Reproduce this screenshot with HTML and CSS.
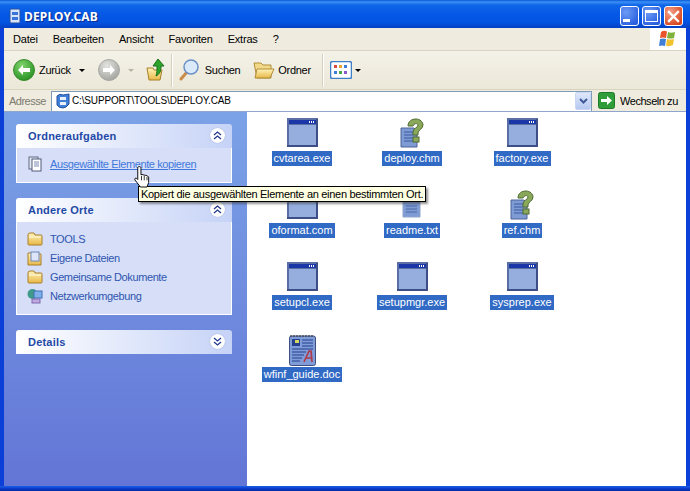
FILE: index.html
```html
<!DOCTYPE html>
<html lang="de">
<head>
<meta charset="utf-8">
<title>DEPLOY.CAB</title>
<link rel="stylesheet" href="styles.css">
</head>
<body>
<svg class="defs" width="0" height="0" aria-hidden="true">
  <defs>
    <linearGradient id="fold" x1="0" y1="0" x2="0" y2="1"><stop offset="0" stop-color="#fff3b8"/><stop offset="1" stop-color="#e8b848"/></linearGradient>
    <radialGradient id="grn" cx=".4" cy=".3" r=".8"><stop offset="0" stop-color="#7fd46a"/><stop offset="1" stop-color="#1f8a1c"/></radialGradient>
    <radialGradient id="gry" cx=".4" cy=".3" r=".8"><stop offset="0" stop-color="#e4e4e0"/><stop offset="1" stop-color="#9c9c98"/></radialGradient>
    <symbol id="exe" viewBox="0 0 31 29">
      <rect x="0" y="0" width="31" height="29" fill="#5a6fa6"/>
      <rect x="29" y="1" width="2" height="28" fill="#3d4f86"/>
      <rect x="0" y="27" width="31" height="2" fill="#3d4f86"/>
      <rect x="2" y="2" width="27" height="4" fill="#1b36a6"/>
      <rect x="22" y="3" width="1" height="2" fill="#fff"/><rect x="24" y="3" width="1" height="2" fill="#fff"/><rect x="26" y="3" width="1" height="2" fill="#fff"/>
      <rect x="2" y="7" width="27" height="20" fill="#95aede"/>
    </symbol>
    <symbol id="chm" viewBox="0 0 24 30">
      <path d="M1 10h13l3 3v16H1z" fill="#7f9bd3" stroke="#4d6299"/>
      <path d="M4 14h9M4 17h9M4 20h9M4 23h9" stroke="#3b5aa0"/>
      <path d="M8 8c0-5 4-7 8-7s7 3 7 6c0 4-5 5-5 8v2h-5v-3c0-4 5-4 5-7 0-2-4-2-5 1z" fill="#8aa85a" stroke="#4f6b33"/>
      <rect x="13" y="19" width="6" height="5" fill="#8aa85a" stroke="#4f6b33"/>
    </symbol>
    <symbol id="folder" viewBox="0 0 16 14">
      <path d="M1 3q0-2 2-2h4l1 2h6q1 0 1 1v8q0 1-1 1H2q-1 0-1-1z" fill="url(#fold)" stroke="#a87f28"/>
      <path d="M2 5h12" stroke="#fffbe0"/>
    </symbol>
  </defs>
</svg>
<div class="window">
  <header class="titlebar">
    <svg class="title-icon" width="16" height="16" viewBox="0 0 16 16"><rect x="3" y="1" width="10" height="14" rx="1" fill="#d8e4fa" stroke="#27509e"/><rect x="5" y="4" width="6" height="3" fill="#3a74d8"/><rect x="5" y="9" width="6" height="3" fill="#3a74d8"/></svg>
    <span class="title-text">DEPLOY.CAB</span>
    <div class="win-btns">
      <div class="win-btn win-min"><span class="min-glyph"></span></div>
      <div class="win-btn win-max"><span class="max-glyph"></span></div>
      <div class="win-btn win-close">
        <svg width="13" height="13" viewBox="0 0 13 13"><path d="M2 2l9 9M11 2l-9 9" stroke="#fff" stroke-width="2.4" stroke-linecap="square"/></svg>
      </div>
    </div>
  </header>

  <nav class="menubar">
    <div class="menu-items">
      <span class="menu-item">Datei</span><span class="menu-item">Bearbeiten</span><span class="menu-item">Ansicht</span><span class="menu-item">Favoriten</span><span class="menu-item">Extras</span><span class="menu-item">?</span>
    </div>
    <div class="brand">
      <svg width="20" height="20" viewBox="0 0 20 20"><path d="M3 3q3-2 6-.5L8 9Q5 8 2 9z" fill="#e8532a"/><path d="M10 3q3 1.500 7 0l-1 6q-4 1-7 0z" fill="#7fb23c"/><path d="M2 10q3-1 6 0l-1 7q-3-1-6 0z" fill="#3f7fd8"/><path d="M9 10q3 1 7 0l-1 6q-4 2-7 .500z" fill="#f2c230"/></svg>
    </div>
  </nav>

  <div class="toolbar">
    <div class="tb-btn tb-back">
      <svg width="22" height="22" viewBox="0 0 22 22"><circle cx="11" cy="11" r="10.500" fill="url(#grn)" stroke="#3b8a2c"/><path d="M5 11l5-5v3h7v4h-7v3z" fill="#fff"/></svg>
      <span class="tb-label">Zurück</span>
    </div>
    <span class="caret caret-back"></span>
    <svg class="tb-fwd" width="22" height="22" viewBox="0 0 22 22"><circle cx="11" cy="11" r="10.500" fill="url(#gry)" stroke="#a8a8a4"/><path d="M17 11l-5-5v3H5v4h7v3z" fill="#fff"/></svg>
    <span class="caret caret-fwd"></span>
    <svg class="tb-up" width="20" height="24" viewBox="0 0 20 24"><path d="M1 10h6l1 2h8l-2 10H3z" fill="url(#fold)" stroke="#a87f28"/><path d="M12 1l6 7h-3c0 5-1 8-5 10 1-3 1-6 1-10H7z" fill="#2da32a" stroke="#1a6f1a"/></svg>
    <span class="tb-sep tb-sep-a"></span>
    <div class="tb-btn tb-search">
      <svg width="22" height="24" viewBox="0 0 22 24"><path d="M3 21l6-7" stroke="#c98a4a" stroke-width="3" stroke-linecap="round"/><circle cx="13" cy="9" r="7" fill="#dbeaf9" stroke="#6a90c8" stroke-width="1.500"/></svg>
      <span class="tb-label">Suchen</span>
    </div>
    <div class="tb-btn tb-folders">
      <svg width="22" height="20" viewBox="0 0 22 20"><path d="M1 3h7l2 2h8v13H4z" fill="#f2d98a" stroke="#b08d3a"/><path d="M4 9h17l-4 9H2z" fill="url(#fold)" stroke="#b08d3a"/></svg>
      <span class="tb-label">Ordner</span>
    </div>
    <span class="tb-sep tb-sep-b"></span>
    <svg class="tb-views" width="22" height="18" viewBox="0 0 22 18"><rect x=".5" y=".5" width="21" height="17" rx="2" fill="#fff" stroke="#3f7fc8" stroke-width="1.500"/><g fill="#d84a3a"><rect x="4" y="4" width="3" height="3"/></g><g fill="#e8a830"><rect x="9" y="4" width="3" height="3"/></g><g fill="#3f7fd8"><rect x="14" y="4" width="3" height="3"/><rect x="4" y="10" width="3" height="3"/></g><g fill="#4aa84a"><rect x="9" y="10" width="3" height="3"/></g><g fill="#8a5ac8"><rect x="14" y="10" width="3" height="3"/></g></svg>
    <span class="caret caret-views"></span>
  </div>

  <div class="addressbar">
    <span class="addr-label">Adresse</span>
    <div class="addr-input">
      <svg width="14" height="16" viewBox="0 0 14 16"><path d="M1 3q3-3 6-1l6-1v10q-3 4-6 4-4 0-6-3z" fill="#3f7fd8" stroke="#27509e"/><rect x="4" y="4" width="6" height="3" fill="#e8f0fc"/><rect x="4" y="9" width="6" height="3" fill="#e8f0fc"/></svg>
      <span class="addr-text">C:\SUPPORT\TOOLS\DEPLOY.CAB</span>
      <div class="addr-drop"><svg width="9" height="6" viewBox="0 0 9 6"><path d="M1 1l3.500 3.500L8 1" fill="none" stroke="#3f5a9a" stroke-width="2"/></svg></div>
    </div>
    <div class="go">
      <svg width="17" height="17" viewBox="0 0 17 17"><rect x=".5" y=".5" width="16" height="16" rx="2" fill="#2f9e3a" stroke="#1f7a2a"/><path d="M3 7h6V4l5 4.500L9 13v-3H3z" fill="#fff"/></svg>
      <span class="go-label">Wechseln zu</span>
    </div>
  </div>

  <main class="content">
    <aside class="sidebar">
      <section class="panel">
        <div class="panel-head"><span class="panel-title">Ordneraufgaben</span><span class="toggle"><svg width="9" height="9" viewBox="0 0 9 9"><path d="M1 4l3.500-3L8 4M1 8l3.500-3L8 8" fill="none" stroke="#22398f" stroke-width="1.300"/></svg></span></div>
        <div class="panel-body body-tasks">
          <div class="link-row">
            <svg width="16" height="16" viewBox="0 0 16 16"><rect x="2" y="1" width="9" height="12" fill="#e4e8f2" stroke="#5f6a84"/><rect x="5" y="3" width="9" height="12" fill="#fff" stroke="#4f5a78"/><path d="M7 6h5M7 8h5M7 10h5" stroke="#7a8ab0"/></svg>
            <span class="link link-active">Ausgewählte Elemente kopieren</span>
          </div>
        </div>
      </section>
      <section class="panel">
        <div class="panel-head"><span class="panel-title">Andere Orte</span><span class="toggle"><svg width="9" height="9" viewBox="0 0 9 9"><path d="M1 4l3.500-3L8 4M1 8l3.500-3L8 8" fill="none" stroke="#22398f" stroke-width="1.300"/></svg></span></div>
        <div class="panel-body body-places">
          <div class="link-row"><svg width="16" height="14" viewBox="0 0 16 14"><use href="#folder"/></svg><span class="link">TOOLS</span></div>
          <div class="link-row"><svg width="16" height="16" viewBox="0 0 16 16"><path d="M1 3h5l1 1h7v11H1z" fill="url(#fold)" stroke="#a87f28"/><rect x="4" y="2" width="8" height="9" fill="#dce6f8" stroke="#6f86b8"/></svg><span class="link">Eigene Dateien</span></div>
          <div class="link-row"><svg width="16" height="14" viewBox="0 0 16 14"><use href="#folder"/></svg><span class="link">Gemeinsame Dokumente</span></div>
          <div class="link-row"><svg width="16" height="16" viewBox="0 0 16 16"><circle cx="5.500" cy="6" r="5" fill="#3f9a8a"/><rect x="7" y="3" width="8" height="7" fill="#7fb0ea" stroke="#3f6fb8"/><rect x="5" y="11" width="8" height="4" fill="#c0a8e0" stroke="#7f68b0"/></svg><span class="link">Netzwerkumgebung</span></div>
        </div>
      </section>
      <section class="panel">
        <div class="panel-head"><span class="panel-title">Details</span><span class="toggle"><svg width="9" height="9" viewBox="0 0 9 9"><path d="M1 1l3.500 3L8 1M1 5l3.500 3L8 5" fill="none" stroke="#22398f" stroke-width="1.300"/></svg></span></div>
      </section>
    </aside>

    <section class="files">
      <div class="file"><svg class="ic-exe"><use href="#exe"/></svg><span class="file-name">cvtarea.exe</span></div>
      <div class="file"><svg class="ic-chm"><use href="#chm"/></svg><span class="file-name">deploy.chm</span></div>
      <div class="file"><svg class="ic-exe"><use href="#exe"/></svg><span class="file-name">factory.exe</span></div>
      <div class="file"><svg class="ic-exe"><use href="#exe"/></svg><span class="file-name">oformat.com</span></div>
      <div class="file"><svg class="ic-txt" viewBox="0 0 20 30"><path d="M1 3h15l2 2v22H1z" fill="#7f9bd3" stroke="#8fa5cc"/><path d="M4 16h11M4 19h11M4 22h11" stroke="#4f6aa8"/></svg><span class="file-name">readme.txt</span></div>
      <div class="file"><svg class="ic-chm"><use href="#chm"/></svg><span class="file-name">ref.chm</span></div>
      <div class="file"><svg class="ic-exe"><use href="#exe"/></svg><span class="file-name">setupcl.exe</span></div>
      <div class="file"><svg class="ic-exe"><use href="#exe"/></svg><span class="file-name">setupmgr.exe</span></div>
      <div class="file"><svg class="ic-exe"><use href="#exe"/></svg><span class="file-name">sysprep.exe</span></div>
      <div class="file"><svg class="ic-doc" viewBox="0 0 27 32"><rect x=".5" y="2" width="26" height="29.500" rx="2" fill="#7f9bd8" stroke="#3f4f7f"/><path d="M2 1v2M5 1v2M8 1v2M11 1v2M14 1v2M17 1v2M20 1v2M23 1v2" stroke="#333"/><rect x="3" y="5" width="8" height="7" fill="#24408f"/><rect x="6" y="6" width="4" height="3" fill="#d8d860"/><path d="M13 6h11M13 9h11M13 12h11M3 15h21M3 18h14M3 21h12M3 24h10M3 27h8" stroke="#24408f"/><path d="M15 28l5-11h2l1 11M17 24h5" fill="none" stroke="#b03a4a" stroke-width="1.700"/></svg><span class="file-name">wfinf_guide.doc</span></div>
    </section>

    <div class="tooltip">Kopiert die ausgewählten Elemente an einen bestimmten Ort.</div>
    <svg class="cursor" width="17" height="22" viewBox="1 1 14 20"><path d="M6 1.500c1 0 1.500 .6 1.500 1.500v6l1-.3 1 .3 1 .3 1.500 .2 1.500 .6 1 1v5l-1.500 4H7l-5-6.500c-.6-1.200 .6-2 1.600-1.300l1 1V3c0-1 .4-1.500 1.400-1.500z" fill="#fff" stroke="#000" stroke-width=".85"/><path d="M8 10v4M10.500 10v4M13 11v3" stroke="#000" stroke-width=".7"/></svg>
  </main>
  <footer class="bottom-edge"></footer>
</div>
</body>
</html>
```

FILE: styles.css
```css
* { box-sizing: border-box; }
html, body { margin: 0; padding: 0; }
body { width: 690px; height: 491px; overflow: hidden; font-family: "Liberation Sans", Arial, sans-serif; font-size: 11px; color: #000; }
.defs { display: block; height: 0; }
.window { width: 690px; height: 491px; display: flex; flex-direction: column; background: #0a3fd8; position: relative; overflow: hidden; }

.titlebar { height: 28px; flex: none; display: flex; align-items: center; padding: 4px 7px 0 7px; background: linear-gradient(#0a58d8 0, #3d92f5 2px, #0f66e8 5px, #0558e6 14px, #0454e2 22px, #0340c4 28px); }
.title-icon { flex: none; margin: 0 1px 0 0; }
.title-text { color: #fff; font-weight: 700; font-size: 12px; font-family: "Noto Sans", sans-serif; text-shadow: 1px 1px 1px #0f2a8a; letter-spacing: .15px; }
.win-btns { margin-left: auto; display: flex; gap: 3px; }
.win-btn { width: 19px; height: 20px; border: 1px solid #fff; border-radius: 3px; display: flex; align-items: center; justify-content: center; position: relative; background: radial-gradient(circle at 30% 30%, #6d9cf5, #2a5fe0 80%); }
.win-close { background: radial-gradient(circle at 30% 30%, #f2a08a, #d8461e 80%); }
.min-glyph { width: 7px; height: 3px; background: #fff; align-self: flex-end; margin: 0 6px 3px 0; }
.max-glyph { width: 13px; height: 12px; border: 1px solid #fff; border-top-width: 3px; }

.menubar { height: 23px; flex: none; margin: 0 4px; display: flex; background: #efecdf; border-bottom: 1px solid #d8d4c0; }
.menu-items { display: flex; align-items: center; padding-left: 9px; gap: 15px; flex: 1; letter-spacing: -.2px; }
.menu-item { line-height: 14px; }
.brand { width: 36px; background: #fff; display: flex; align-items: center; justify-content: center; }

.toolbar { height: 39px; flex: none; margin: 0 4px; display: flex; align-items: center; padding-left: 9px; background: linear-gradient(#f4f2e8, #ebe8d8); border-bottom: 1px solid #d8d4c0; }
.tb-btn { display: flex; align-items: center; flex: none; }
.tb-label { line-height: 14px; letter-spacing: -.3px; }
.tb-back { gap: 4px; }
.caret { width: 0; height: 0; border: 3px solid transparent; border-top: 3px solid #000; border-bottom: 0; flex: none; }
.caret-back { margin-left: 8px; }
.tb-fwd { margin-left: 13px; flex: none; }
.caret-fwd { margin-left: 8px; border-top-color: #b8b5a5; }
.tb-up { margin-left: 12px; flex: none; }
.tb-sep { width: 1px; height: 33px; background: #d4d0bc; box-shadow: 1px 0 0 #fff; flex: none; }
.tb-sep-a { margin-left: 5px; }
.tb-search { margin-left: 6px; gap: 5px; }
.tb-folders { margin-left: 13px; gap: 3px; }
.tb-sep-b { margin-left: 11px; }
.tb-views { margin-left: 7px; flex: none; }
.caret-views { margin-left: 3px; }

.addressbar { height: 21px; flex: none; margin: 0 4px; display: flex; align-items: center; padding-left: 5px; background: #efecdf; }
.addr-label { color: #7c7a6e; width: 42px; flex: none; line-height: 14px; letter-spacing: -.5px; }
.addr-input { width: 541px; height: 20px; flex: none; display: flex; align-items: center; gap: 2px; padding: 0 0 0 4px; background: #fff; border: 1px solid #7f9db9; border-width: 1px 1px 0 1px; }
.addr-text { line-height: 14px; flex: 1; font-size: 10px; letter-spacing: -.15px; }
.addr-drop { width: 16px; height: 18px; flex: none; display: flex; align-items: center; justify-content: center; background: linear-gradient(#dfe8fb, #b5c8f0); border-radius: 2px; border: 1px solid #c8d6f4; }
.go { margin-left: 6px; display: flex; align-items: center; gap: 5px; }
.go-label { line-height: 14px; letter-spacing: -.45px; }

.content { flex: 1; min-height: 0; margin: 0 4px; display: flex; position: relative; border-top: 1px solid #8ea6cc; background: #fff; }
.sidebar { width: 243px; flex: none; padding: 12px 15px 0 12px; display: flex; flex-direction: column; gap: 15px; background: linear-gradient(#7ba2e7, #6375d6); }
.panel { display: flex; flex-direction: column; }
.panel-head { height: 24px; display: flex; align-items: center; justify-content: space-between; padding: 0 7px 0 12px; background: linear-gradient(90deg, #fff, #c6d3f7); border-radius: 3px 3px 0 0; }
.panel-title { font-weight: 700; font-size: 11px; color: #1f49a6; line-height: 14px; letter-spacing: .2px; }
.toggle { width: 15px; height: 15px; border-radius: 50%; background: #fff; box-shadow: 0 0 1px #7b8fc8; display: flex; align-items: center; justify-content: center; margin-bottom: 2px; }
.panel-body { background: #d6dff7; border: 1px solid #fff; border-top: 0; padding: 0 0 0 10px; display: flex; flex-direction: column; }
.body-tasks { height: 35px; padding-top: 8px; }
.body-places { height: 93px; padding-top: 9px; gap: 3px; }
.link-row { height: 16px; display: flex; align-items: center; gap: 7px; color: #2a4fa8; }
.link-row svg { flex: none; }
.link { color: #2f55b0; line-height: 14px; letter-spacing: -.4px; }
.link-active { color: #3f78dc; text-decoration: underline; }

.files { flex: 1; padding: 6px 0 0 0; display: grid; grid-template-columns: repeat(3, 110px); grid-auto-rows: 72px; align-content: start; }
.file { display: flex; flex-direction: column; align-items: center; height: 72px; position: relative; }
.ic-exe { width: 31px; height: 29px; margin-bottom: 4px; flex: none; }
.ic-chm { width: 24px; height: 30px; margin-bottom: 3px; flex: none; }
.ic-txt { width: 20px; height: 30px; margin-bottom: 3px; flex: none; }
.ic-doc { width: 27px; height: 32px; margin-bottom: 1px; flex: none; }
.file-name { background: #316ac5; color: #fff; line-height: 15px; height: 15px; padding: 0 2px; white-space: nowrap; }

.tooltip { position: absolute; left: 134px; top: 74px; height: 16px; padding: 0 2px; line-height: 14px; background: #ffffe1; border: 1px solid #000; box-shadow: 2px 2px 2px rgba(60,60,60,.55); white-space: nowrap; z-index: 3; letter-spacing: -.3px; }
.cursor { position: absolute; left: 129px; top: 54px; z-index: 4; }
.bottom-edge { height: 5px; flex: none; background: linear-gradient(#1b5fe6, #0837c8 60%, #062aa0); }
```
